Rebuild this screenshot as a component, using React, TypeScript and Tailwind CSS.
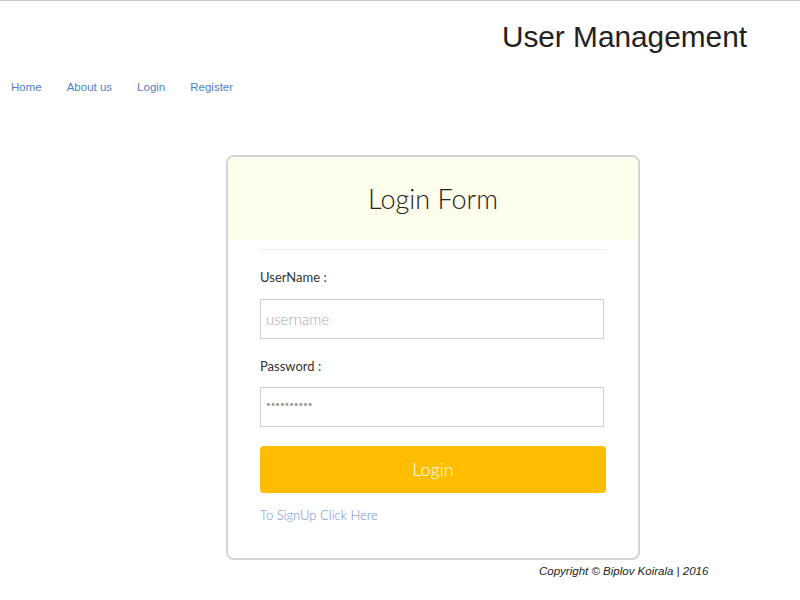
import React from 'react';

const navLinks = ['Home', 'About us', 'Login', 'Register'];

export default function App() {
  return (
    <div className="min-h-[600px] w-[800px] bg-white border-t border-[#c8c8c8] font-['Liberation_Sans',Arial,sans-serif]">
      <div className="flex justify-end pr-[53px] pt-[18px]">
        <h1 className="text-[29.8px] leading-[36px] text-[#222]">User Management</h1>
      </div>
      <nav className="flex gap-[25px] pl-[11px] mt-[24px]">
        {navLinks.map((l) => (
          <a key={l} href="#" className="text-[11.5px] leading-[16px] text-[#4f7fc4]">
            {l}
          </a>
        ))}
      </nav>
      <div className="ml-[226px] mt-[60px] w-[414px] h-[405px] border-2 border-[#d4d4d4] rounded-[8px] overflow-hidden font-['Lato',sans-serif]">
        <div className="bg-[#fefeec] h-[83px] flex items-center justify-center">
          <h2 className="text-[27px] font-light text-[#222] pt-[1px]">Login Form</h2>
        </div>
        <div className="px-[32px]">
          <div className="border-t border-[#f0f0f0] mt-[9px]" />
          <label className="block text-[13px] text-[#333] mt-[19px] leading-[16px]">UserName :</label>
          <input
            className="block mt-[14px] w-[344px] h-[40px] border border-[#d0d0d0] px-[5px] text-[15px] font-light placeholder:text-[#aaa] outline-none"
            placeholder="username"
          />
          <label className="block text-[13px] text-[#333] mt-[19px] leading-[16px]">Password :</label>
          <input
            className="block mt-[13px] w-[344px] h-[40px] border border-[#d0d0d0] px-[5px] pb-[6px] text-[8px] placeholder:text-[#999] outline-none"
            placeholder="••••••••••"
          />
          <button className="block mt-[19px] w-[346px] h-[47px] bg-[#ffbd00] rounded-[4px] text-white text-[18px] font-light">
            Login
          </button>
          <a href="#" className="block mt-[13px] text-[13px] text-[#6f8fcf] font-light">
            To SignUp Click Here
          </a>
        </div>
      </div>
      <div className="ml-[539px] mt-[4px] text-[11.5px] leading-[14px] italic text-[#222]">Copyright © Biplov Koirala | 2016</div>
    </div>
  );
}
